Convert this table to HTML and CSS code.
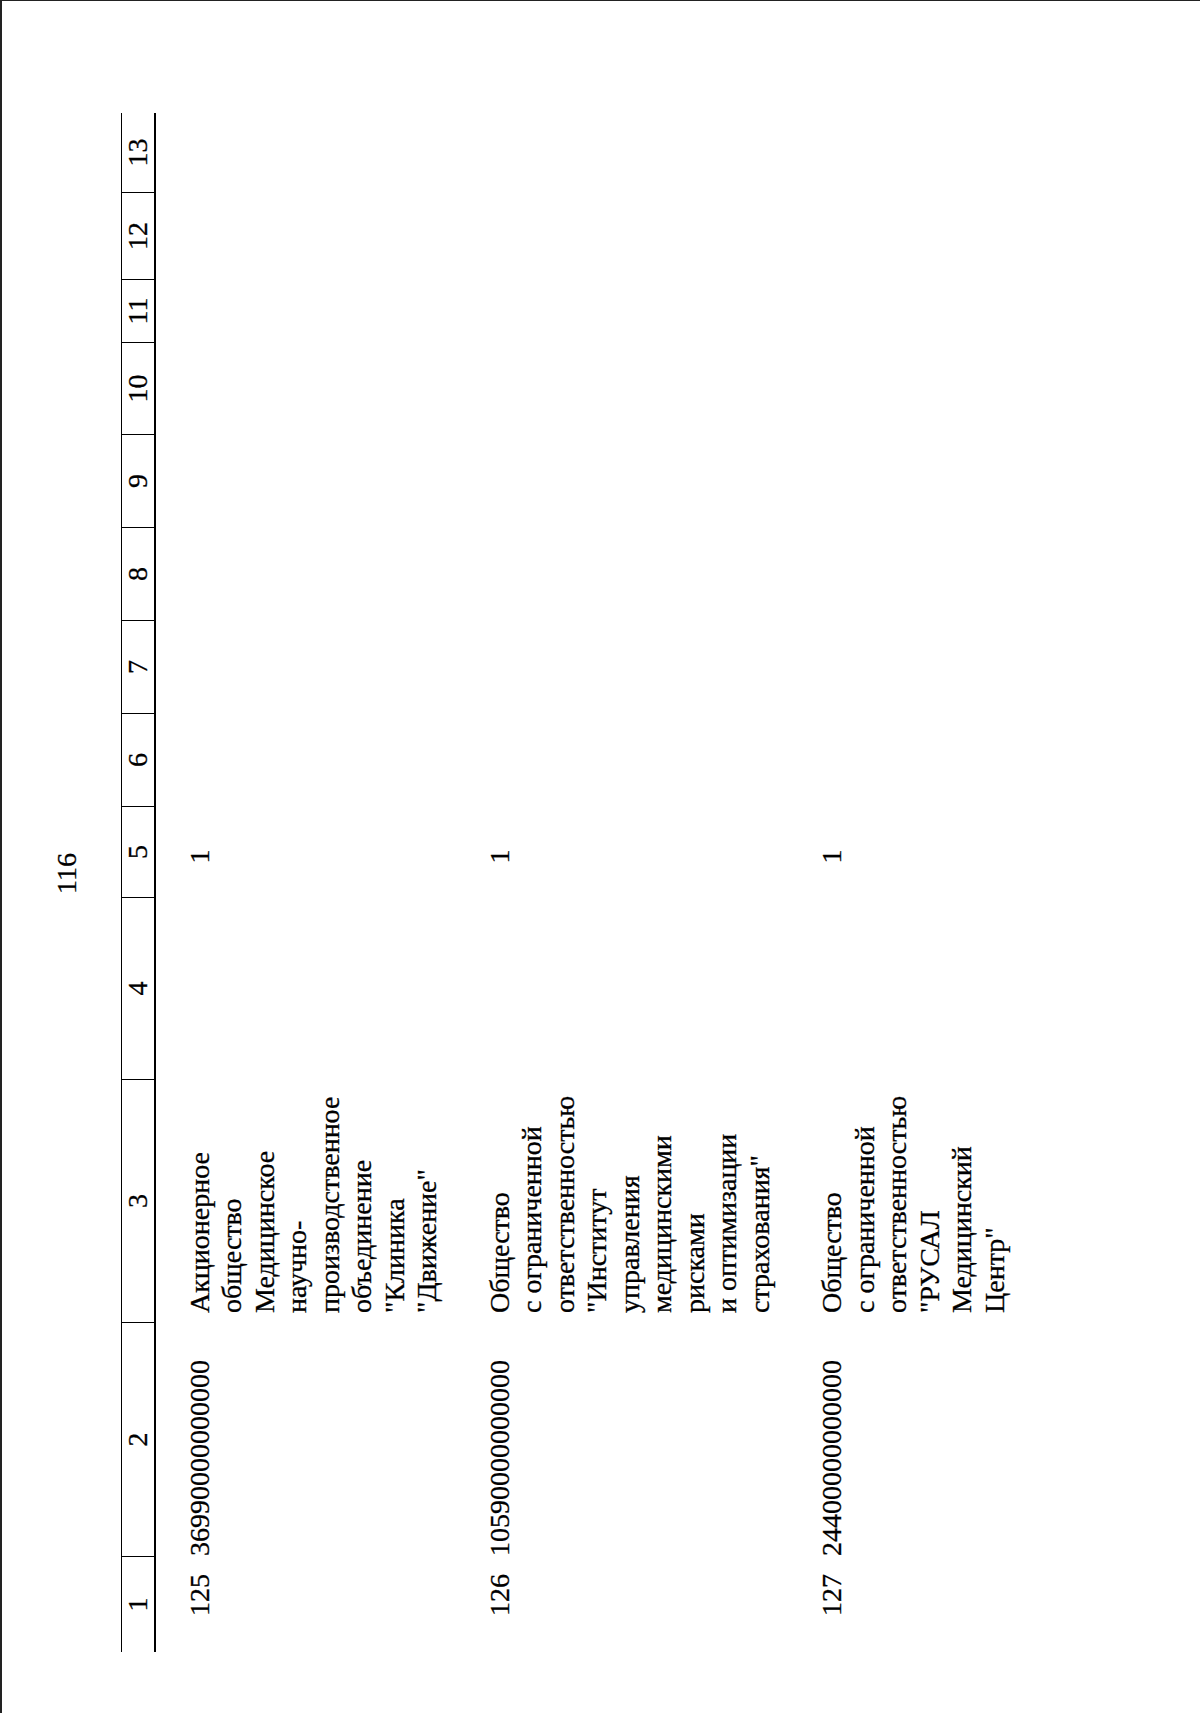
FILE: index.html
```html
<!DOCTYPE html>
<html lang="ru">
<head>
    <meta charset="utf-8">
    <title>Перечень - стр. 116</title>
    <link rel="stylesheet" href="styles.css">
</head>
<body>
    <div class="sheet">
        <div class="page">
            <div class="page-num">116</div>

            <table class="register">
                <colgroup>
                    <col class="c1"><col class="c2"><col class="c3"><col class="c4">
                    <col class="c5"><col class="c6"><col class="c7"><col class="c8">
                    <col class="c9"><col class="c10"><col class="c11"><col class="c12">
                    <col class="c13">
                </colgroup>
                <thead>
                    <tr>
                        <th>1</th><th>2</th><th>3</th><th>4</th><th>5</th><th>6</th><th>7</th>
                        <th>8</th><th>9</th><th>10</th><th>11</th><th>12</th><th>13</th>
                    </tr>
                </thead>
                <tbody>
                    <tr>
                        <td class="num">125</td>
                        <td class="code">36990000000000</td>
                        <td class="name">Акционерное<br>общество<br>Медицинское<br>научно-<br>производственное<br>объединение<br>"Клиника<br>"Движение"</td>
                        <td></td>
                        <td class="qty">1</td>
                        <td></td><td></td><td></td><td></td><td></td><td></td><td></td><td></td>
                    </tr>
                    <tr>
                        <td class="num">126</td>
                        <td class="code">10590000000000</td>
                        <td class="name">Общество<br>с ограниченной<br>ответственностью<br>"Институт<br>управления<br>медицинскими<br>рисками<br>и оптимизации<br>страхования"</td>
                        <td></td>
                        <td class="qty">1</td>
                        <td></td><td></td><td></td><td></td><td></td><td></td><td></td><td></td>
                    </tr>
                    <tr>
                        <td class="num">127</td>
                        <td class="code">24400000000000</td>
                        <td class="name">Общество<br>с ограниченной<br>ответственностью<br>"РУСАЛ<br>Медицинский<br>Центр"</td>
                        <td></td>
                        <td class="qty">1</td>
                        <td></td><td></td><td></td><td></td><td></td><td></td><td></td><td></td>
                    </tr>
                </tbody>
            </table>
        </div>
    </div>
</body>
</html>
```

FILE: styles.css
```css
html, body {
    margin: 0;
    padding: 0;
    background-color: #fff;
}

/* scanned sheet, portrait window */
.sheet {
    width: 1200px;
    height: 1713px;
    overflow: hidden;
    box-shadow: inset 2px 1px 0 #222;
}

/* the landscape page, turned a quarter left */
.page {
    width: 1713px;
    height: 1200px;
    padding-top: 51px;
    box-sizing: border-box;
    transform-origin: 0 0;
    transform: rotate(-90deg) translateX(-100%);
    font-family: "Liberation Serif", "Times New Roman", serif;
    font-size: 28px;
    color: #000;
    -webkit-text-stroke: 0.3px #000;
}

.page-num {
    margin-left: 61px;
    padding-left: 18px;
    width: 1539px;
    box-sizing: border-box;
    text-align: center;
    line-height: 32.5px;
}

.register {
    margin-top: 37px;
    margin-left: 61px;
    width: 1539px;
    table-layout: fixed;
    border-collapse: separate;
    border-spacing: 0;
}

.c1 { width: 96px; }
.c2 { width: 234px; }
.c3 { width: 243px; }
.c4 { width: 182px; }
.c5 { width: 91px; }
.c6 { width: 93px; }
.c7 { width: 93px; }
.c8 { width: 93px; }
.c9 { width: 93px; }
.c10 { width: 92px; }
.c11 { width: 63px; }
.c12 { width: 87px; }
.c13 { width: 79px; }

.register th {
    height: 32px;
    padding: 0;
    line-height: 32px;
    font-weight: normal;
    text-align: center;
    border-top: 1px solid #000;
    border-bottom: 2px solid #000;
    border-right: 1px solid #000;
}

.register th:last-child {
    border-right: none;
}

.register td {
    padding: 0 0 40px 0;
    line-height: 32.5px;
    vertical-align: top;
}

.register tbody tr:first-child td {
    padding-top: 28px;
}

.register .num {
    text-align: right;
    padding-right: 18px;
}

.register .code {
    white-space: nowrap;
}

.register .name {
    padding-left: 9px;
}

.register .qty {
    text-align: center;
    padding-right: 10px;
}
```
